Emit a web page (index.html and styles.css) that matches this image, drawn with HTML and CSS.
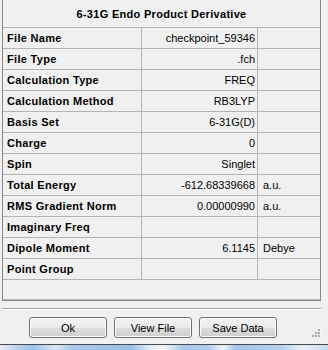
FILE: index.html
```html
<!DOCTYPE html>
<html lang="en">
<head>
    <meta charset="UTF-8">
    <title>6-31G Endo Product Derivative</title>
    <link rel="stylesheet" href="styles.css">
</head>
<body>
    <div class="window">
        <div class="grid">
            <div class="caption">6-31G Endo Product Derivative</div>

            <div class="row"><div class="label">File Name</div><div class="value">checkpoint_59346</div><div class="unit"></div></div>
            <div class="row"><div class="label">File Type</div><div class="value">.fch</div><div class="unit"></div></div>
            <div class="row"><div class="label">Calculation Type</div><div class="value">FREQ</div><div class="unit"></div></div>
            <div class="row"><div class="label">Calculation Method</div><div class="value">RB3LYP</div><div class="unit"></div></div>
            <div class="row"><div class="label">Basis Set</div><div class="value">6-31G(D)</div><div class="unit"></div></div>
            <div class="row"><div class="label">Charge</div><div class="value">0</div><div class="unit"></div></div>
            <div class="row"><div class="label">Spin</div><div class="value">Singlet</div><div class="unit"></div></div>
            <div class="row"><div class="label">Total Energy</div><div class="value">-612.68339668</div><div class="unit">a.u.</div></div>
            <div class="row"><div class="label">RMS Gradient Norm</div><div class="value">0.00000990</div><div class="unit">a.u.</div></div>
            <div class="row"><div class="label">Imaginary Freq</div><div class="value"></div><div class="unit"></div></div>
            <div class="row"><div class="label">Dipole Moment</div><div class="value">6.1145</div><div class="unit">Debye</div></div>
            <div class="row"><div class="label">Point Group</div><div class="value"></div><div class="unit"></div></div>

            <div class="filler"></div>
        </div>

        <div class="separator"></div>

        <div class="buttons">
            <button>Ok</button>
            <button>View File</button>
            <button>Save Data</button>
            <!-- size grip -->
            <svg class="grip" width="9" height="9" viewBox="0 0 9 9">
                <g fill="#fff">
                    <rect x="7" y="1" width="2" height="2"/>
                    <rect x="4" y="4" width="2" height="2"/>
                    <rect x="7" y="4" width="2" height="2"/>
                    <rect x="1" y="7" width="2" height="2"/>
                    <rect x="4" y="7" width="2" height="2"/>
                    <rect x="7" y="7" width="2" height="2"/>
                </g>
                <g fill="#a8a8a8">
                    <rect x="6" y="0" width="2" height="2"/>
                    <rect x="3" y="3" width="2" height="2"/>
                    <rect x="6" y="3" width="2" height="2"/>
                    <rect x="0" y="6" width="2" height="2"/>
                    <rect x="3" y="6" width="2" height="2"/>
                    <rect x="6" y="6" width="2" height="2"/>
                </g>
            </svg>
        </div>
    </div>
    <div class="desktop"></div>
</body>
</html>
```

FILE: styles.css
```css
body {
    margin: 0;
    font-family: "Liberation Sans", Arial, sans-serif;
    font-size: 11px;
    color: #000;
    background: #f0f0f0;
}

.window {
    height: 344px;
    background: #f0f0f0;
    border-bottom: 1px solid #4a4a4a;
    overflow: hidden;
}

.grid {
    width: 319px;
    margin-left: 2px;
    box-sizing: border-box;
    border-left: 1px solid #828790;
    border-right: 1px solid #828790;
    border-bottom: 1px solid #828790;
}

.caption {
    height: 27px;
    line-height: 28px;
    text-align: center;
    font-weight: bold;
    letter-spacing: 0.3px;
}

.row {
    display: flex;
    height: 20px;
    line-height: 20px;
    border-top: 1px solid #b4b4b4;
    white-space: nowrap;
}

.label {
    width: 139px;
    box-sizing: border-box;
    padding-left: 4px;
    border-right: 1px solid #b4b4b4;
    font-weight: bold;
    letter-spacing: 0.3px;
}

.value {
    width: 116px;
    box-sizing: border-box;
    padding-right: 2px;
    border-right: 1px solid #b4b4b4;
    text-align: right;
}

.unit {
    width: 62px;
    padding-left: 5px;
    box-sizing: border-box;
}

.filler {
    height: 19px;
    border-top: 1px solid #b4b4b4;
    border-bottom: 1px solid #b4b4b4;
}

.separator {
    width: 319px;
    margin: 7px 0 0 2px;
    border-top: 1px solid #a0a0a0;
    border-bottom: 1px solid #fff;
}

.buttons {
    display: flex;
    gap: 7px;
    margin: 7px 0 0 29px;
    height: 21px;
}

button {
    width: 78px;
    height: 21px;
    padding: 0;
    font-family: "Liberation Sans", Arial, sans-serif;
    font-size: 11px;
    color: #000;
    border: 1px solid #707070;
    border-radius: 3px;
    background: linear-gradient(#f2f2f2 0%, #ebebeb 50%, #dddddd 50%, #cfcfcf 100%);
    box-shadow: inset 0 0 0 1px #fcfcfc;
}

.grip {
    margin: 12px 0 0 28px;
}

.desktop {
    height: 6px;
    background: linear-gradient(90deg,
        #e8f0f8 0%, #c4d8ee 4%, #9ec2e8 10%, #d8e6f4 17%,
        #a9c9ea 22%, #9cc0e6 40%, #e4eef8 46%,
        #f2f6fa 50%, #a6c8ea 56%, #b2cfec 64%, #eef4fa 68%,
        #a2c4e8 72%, #b8d2ee 86%, #e6eef8 92%, #c8dcf0 100%);
}
```
